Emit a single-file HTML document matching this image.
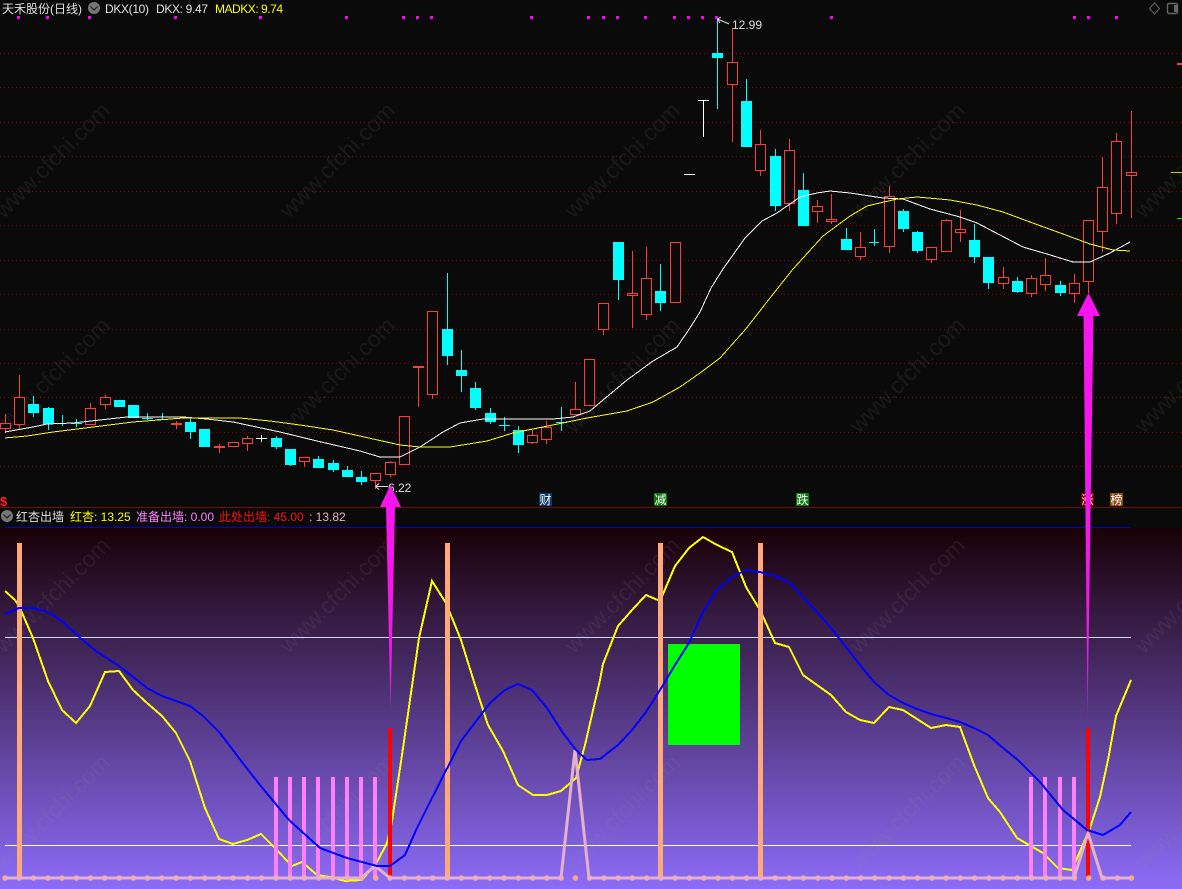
<!DOCTYPE html>
<html lang="zh-CN">
<head>
<meta charset="utf-8">
<title>天禾股份 (日线)</title>
<style>
html,body{margin:0;padding:0;background:#0a0a0a;width:1182px;height:889px;overflow:hidden}
svg{display:block;position:absolute;left:0;top:0}
text{font-family:"Liberation Sans","Noto Sans CJK SC",sans-serif;font-size:12px}
.wm text{font-size:23px;fill:rgba(150,150,150,.115)}
</style>
</head>
<body>
<svg width="1182" height="889" viewBox="0 0 1182 889" xmlns="http://www.w3.org/2000/svg">
<defs>
<linearGradient id="bg" x1="0" y1="0" x2="0" y2="1">
<stop offset="0" stop-color="#190006"/>
<stop offset="1" stop-color="#8c6cf8"/>
</linearGradient>
<linearGradient id="fadeA" x1="0" y1="0" x2="0" y2="1">
<stop offset="0" stop-color="#f814ee"/>
<stop offset=".8" stop-color="#f01ae8"/>
<stop offset="1" stop-color="#a030c0"/>
</linearGradient>
</defs>

<rect width="1182" height="889" fill="#0a0a0a"/>
<rect x="0" y="528" width="1182" height="361" fill="url(#bg)"/>

<!-- dotted grid -->
<g stroke="#8a0000" stroke-width="1" stroke-dasharray="1 3" shape-rendering="crispEdges">
<path d="M0 53.5H1182M0 87.5H1182M0 122.5H1182M0 156.5H1182M0 191.5H1182M0 225.5H1182M0 260.5H1182M0 294.5H1182M0 329.5H1182M0 363.5H1182M0 397.5H1182M0 432.5H1182M0 466.5H1182" fill="none"/>
</g>
<path d="M0 507.5H1182" stroke="#7a0808" stroke-width="1" shape-rendering="crispEdges"/>
<path d="M5 527.5H1131" stroke="#0000e0" stroke-width="1" shape-rendering="crispEdges"/>

<!-- watermark -->
<g class="wm" text-anchor="middle">
<text transform="translate(52 160) rotate(-45)" y="8">www.cfchi.com</text>
<text transform="translate(337 160) rotate(-45)" y="8">www.cfchi.com</text>
<text transform="translate(622 160) rotate(-45)" y="8">www.cfchi.com</text>
<text transform="translate(907 160) rotate(-45)" y="8">www.cfchi.com</text>
<text transform="translate(1192 160) rotate(-45)" y="8">www.cfchi.com</text>
<text transform="translate(52 375) rotate(-45)" y="8">www.cfchi.com</text>
<text transform="translate(337 375) rotate(-45)" y="8">www.cfchi.com</text>
<text transform="translate(622 375) rotate(-45)" y="8">www.cfchi.com</text>
<text transform="translate(907 375) rotate(-45)" y="8">www.cfchi.com</text>
<text transform="translate(1192 375) rotate(-45)" y="8">www.cfchi.com</text>
<text transform="translate(52 595) rotate(-45)" y="8">www.cfchi.com</text>
<text transform="translate(337 595) rotate(-45)" y="8">www.cfchi.com</text>
<text transform="translate(622 595) rotate(-45)" y="8">www.cfchi.com</text>
<text transform="translate(907 595) rotate(-45)" y="8">www.cfchi.com</text>
<text transform="translate(1192 595) rotate(-45)" y="8">www.cfchi.com</text>
<text transform="translate(52 812) rotate(-45)" y="8">www.cfchi.com</text>
<text transform="translate(337 812) rotate(-45)" y="8">www.cfchi.com</text>
<text transform="translate(622 812) rotate(-45)" y="8">www.cfchi.com</text>
<text transform="translate(907 812) rotate(-45)" y="8">www.cfchi.com</text>
<text transform="translate(1192 812) rotate(-45)" y="8">www.cfchi.com</text>
</g>

<!-- magenta top dots -->
<g fill="#ff00ff" shape-rendering="crispEdges">
<rect x="17" y="16" width="3" height="3"/><rect x="46" y="16" width="3" height="3"/><rect x="88" y="16" width="3" height="3"/><rect x="174" y="16" width="3" height="3"/><rect x="259" y="16" width="3" height="3"/><rect x="345" y="16" width="3" height="3"/><rect x="402" y="16" width="3" height="3"/><rect x="416" y="16" width="3" height="3"/><rect x="430" y="16" width="3" height="3"/><rect x="530" y="16" width="3" height="3"/><rect x="587" y="16" width="3" height="3"/><rect x="602" y="16" width="3" height="3"/><rect x="616" y="16" width="3" height="3"/><rect x="644" y="16" width="3" height="3"/><rect x="673" y="16" width="3" height="3"/><rect x="687" y="16" width="3" height="3"/><rect x="701" y="16" width="3" height="3"/><rect x="715" y="16" width="3" height="3"/><rect x="830" y="16" width="3" height="3"/><rect x="1073" y="16" width="3" height="3"/><rect x="1087" y="16" width="3" height="3"/><rect x="1115" y="16" width="3" height="3"/>
</g>

<!-- candles: wicks -->
<g shape-rendering="crispEdges" fill="none">
<path stroke="#ff3c3c" d="M5.5 414V433M19.5 375V430M90.5 403V425M105.5 395V409M176.5 421V429M219.5 444V453M247.5 436V451M304.5 462V467M375.5 481V489M390.5 461V477M418.5 367V407M432.5 395V399M532.5 430V444M546.5 421V444M575.5 382V415M603.5 330V335M632.5 251V328M646.5 247V320M732.5 28V142M760.5 130V176M789.5 139V211M817.5 200V223M831.5 194V224M860.5 232V260M889.5 186V253M931.5 260V263M946.5 219V252M960.5 210V242M1003.5 267V289M1031.5 275V297M1045.5 258V291M1074.5 274V303M1088.5 282V293M1102.5 157V252M1116.5 133V224M1131.5 111V218"/>
<path stroke="#00ffff" d="M33.5 396V417M48.5 407V430M62.5 415V426M76.5 419V427M71 423.5H82M147.5 413V420M142 418.5H153M162.5 413V420M157 419.5H168M190.5 419V439M276.5 436V449M290.5 449V466M318.5 456V468M333.5 460V472M347.5 466V477M361.5 471V485M447.5 273V365M461.5 350V392M475.5 382V410M490.5 408V424M504.5 417V431M499 425.5H510M518.5 426V453M561.5 407V431M556 422.5H567M618.5 280V300M660.5 264V311M717.5 19V109M746.5 79V101M775.5 149V211M803.5 173V190M846.5 228V239M874.5 229V246M869 242.5H879M903.5 209V232M917.5 231V253M974.5 224V263M988.5 283V289M1017.5 277V293M1060.5 281V296"/>
<path stroke="#ffffff" d="M261.5 435V442M256 438.5H267M703.5 100V137M698 100.5H709M684 174.5H695"/>
</g>
<!-- candles: cyan bodies -->
<path fill="#00ffff" shape-rendering="crispEdges" d="M28 404h11V413h-11zM43 408h11V424h-11zM114 400h11V407h-11zM128 405h11V418h-11zM185 422h11V432h-11zM199 429h11V447h-11zM271 438h11V447h-11zM285 449h11V465h-11zM313 459h11V468h-11zM328 463h11V470h-11zM342 470h11V477h-11zM356 477h11V482h-11zM442 329h11V356h-11zM456 370h11V376h-11zM470 388h11V408h-11zM485 413h11V422h-11zM513 430h11V445h-11zM613 242h11V280h-11zM655 291h11V303h-11zM712 53h11V58h-11zM741 101h11V147h-11zM770 156h11V206h-11zM798 190h11V226h-11zM841 239h11V250h-11zM898 211h11V229h-11zM912 232h11V251h-11zM969 240h11V257h-11zM983 257h11V283h-11zM1012 281h11V292h-11zM1055 285h11V293h-11z"/>
<!-- candles: red hollow bodies -->
<path fill="#0a0a0a" stroke="#ff3c3c" stroke-width="1" shape-rendering="crispEdges" d="M.5 423.5h10V428.5h-10zM14.5 397.5h10V424.5h-10zM85.5 408.5h10V424.5h-10zM100.5 397.5h10V404.5h-10zM214.5 446.5h10V447.5h-10zM228.5 442.5h10V446.5h-10zM242.5 438.5h10V443.5h-10zM299.5 457.5h10V461.5h-10zM370.5 473.5h10V480.5h-10zM385.5 462.5h10V474.5h-10zM399.5 416.5h10V464.5h-10zM427.5 311.5h10V394.5h-10zM527.5 435.5h10V442.5h-10zM541.5 427.5h10V439.5h-10zM570.5 409.5h10V414.5h-10zM584.5 359.5h10V405.5h-10zM598.5 303.5h10V329.5h-10zM627.5 293.5h10V295.5h-10zM641.5 278.5h10V314.5h-10zM670.5 242.5h10V302.5h-10zM727.5 62.5h10V84.5h-10zM755.5 144.5h10V170.5h-10zM784.5 150.5h10V203.5h-10zM812.5 206.5h10V211.5h-10zM826.5 219.5h10V221.5h-10zM855.5 247.5h10V256.5h-10zM884.5 196.5h10V246.5h-10zM926.5 247.5h10V259.5h-10zM941.5 220.5h10V251.5h-10zM955.5 229.5h10V232.5h-10zM998.5 277.5h10V283.5h-10zM1026.5 278.5h10V293.5h-10zM1040.5 275.5h10V284.5h-10zM1069.5 283.5h10V293.5h-10zM1083.5 220.5h10V281.5h-10zM1097.5 187.5h10V231.5h-10zM1111.5 141.5h10V213.5h-10zM1126.5 172.5h10V175.5h-10z"/>
<g fill="#ff3c3c" shape-rendering="crispEdges">
<rect x="171" y="423" width="11" height="2"/>
<rect x="413" y="366" width="11" height="2"/>
</g>

<!-- MA curves -->
<polyline fill="none" stroke="#ffffff" stroke-width="1" shape-rendering="crispEdges" points="5,432 33,427 47,424 73,423 100,420 127,417 183,417 207,419 233,422 280,432 317,441 360,451 380,457 400,457 420,447 443,432 460,423 483,419 553,419 573,417 590,411 603,400 627,380 653,361 677,347 690,328 700,312 711,288 723,269 745,238 762,221 777,213 800,197 817,193 830,191 850,193 883,198 903,199 930,209 960,217 977,223 1023,247 1047,254 1073,262 1090,262 1110,253 1130,242"/>
<polyline fill="none" stroke="#ffff00" stroke-width="1" shape-rendering="crispEdges" points="5,438 27,436 53,432 93,427 133,422 183,418 240,418 270,421 300,425 333,430 400,445 420,447 450,447 487,441 513,433 543,427 587,418 627,411 653,402 680,387 700,373 720,358 745,330 770,298 793,269 823,236 850,216 867,206 897,199 917,197 950,200 977,205 1003,212 1030,222 1063,234 1090,244 1113,250 1130,251"/>

<!-- right ticks -->
<g shape-rendering="crispEdges">
<rect x="1177" y="63" width="5" height="2" fill="#ff3c3c"/>
<rect x="1171" y="172" width="11" height="1" fill="#c8c800"/>
<rect x="1177" y="218" width="5" height="1" fill="#00e000"/>
</g>

<!-- high/low marks -->
<path d="M717.5 19L729 24M717.5 19L721 17M717.5 19L720 23" fill="none" stroke="#dddddd" stroke-width="1"/>
<text x="732" y="29" fill="#dddddd">12.99</text>
<path d="M375.5 486.5H388M375.5 486.5L379 483.5M375.5 486.5L379 489.5" fill="none" stroke="#dddddd" stroke-width="1"/>
<text x="388" y="492" fill="#dddddd">6.22</text>

<!-- header -->
<text x="2" y="13" fill="#e0e0e0">天禾股份(日线)</text>
<circle cx="94" cy="8" r="6" fill="#777777"/>
<path d="M90.5 6.5L94 10L97.5 6.5" fill="none" stroke="#1e1e1e" stroke-width="1.2"/>
<text x="105" y="13" fill="#e0e0e0" textLength="44">DKX(10)</text>
<text x="156" y="13" fill="#e0e0e0" textLength="52">DKX: 9.47</text>
<text x="215" y="13" fill="#ffff00" textLength="68">MADKX: 9.74</text>
<path d="M1154.5 3L1159.5 8.5L1154.5 14L1149.5 8.5Z" fill="none" stroke="#666666" stroke-width="1"/>
<rect x="1167.5" y="3.5" width="10" height="10" rx="1.5" fill="none" stroke="#666666" stroke-width="1.4"/>
<rect x="1174" y="5" width="3" height="7" fill="#666666"/>

<!-- marker row -->
<text x="0" y="506" fill="#ff2020" font-weight="bold" style="font-size:13px">$</text>
<rect x="539" y="493" width="13" height="13" fill="#0a3a6a"/><text x="539.5" y="504" fill="#ffffff">财</text>
<rect x="654" y="493" width="13" height="13" fill="#0a7a0a"/><text x="654.5" y="504" fill="#ffffff">减</text>
<rect x="796" y="493" width="13" height="13" fill="#0a7a0a"/><text x="796.5" y="504" fill="#ffffff">跌</text>
<rect x="1081" y="493" width="13" height="13" fill="#800000"/><text x="1081.5" y="504" fill="#ffffff">涨</text>
<rect x="1110" y="493" width="13" height="13" fill="#8b4a10"/><text x="1110.5" y="504" fill="#ffffff">榜</text>

<!-- second panel header -->
<circle cx="7" cy="516" r="6" fill="#777777"/>
<path d="M3.5 514.5L7 518L10.5 514.5" fill="none" stroke="#1e1e1e" stroke-width="1.2"/>
<text x="16" y="521" fill="#e0e0e0">红杏出墙</text>
<text x="70" y="521" fill="#ffff00">红杏: 13.25</text>
<text x="136" y="521" fill="#ff80ff">准备出墙: 0.00</text>
<text x="219" y="521" fill="#ff1010">此处出墙: 45.00</text>
<text x="309" y="521" fill="#e8b0c8">: 13.82</text>

<!-- lower panel -->
<path d="M5 637.5H1131" stroke="#c4dce8" stroke-width="1" shape-rendering="crispEdges"/>
<path d="M5 845.5H1131" stroke="#ffffff" stroke-width="1" shape-rendering="crispEdges"/>
<rect x="668" y="644" width="72" height="101" fill="#00ff00" shape-rendering="crispEdges"/>

<polyline fill="none" stroke="#ffff00" stroke-width="2" shape-rendering="crispEdges" points="5,591 15,600 19,606 33,638 48,681 62,710 76,723 90,706 105,672 119,671 133,690 147,703 162,716 176,733 190,761 205,808 219,839 233,844 247,840 261,834 274,847 292,866 302,862 317,875 330,877 345,881 362,880 377,862 387,843 392,821 402,755 419,638 432,581 446,603 461,640 475,685 488,725 503,751 518,785 533,795 547,795 561,791 576,778 585,745 600,680 603,664 618,626 632,610 646,595 660,601 675,566 689,548 703,537 717,545 732,552 746,587 760,610 775,643 789,647 803,675 817,685 831,695 846,712 860,720 874,723 889,707 903,710 917,719 931,728 946,725 960,727 974,765 988,798 1000,812 1017,838 1043,853 1058,868 1072,870 1090,828 1100,797 1108,760 1116,716 1131,680"/>

<!-- bars -->
<g shape-rendering="crispEdges">
<g fill="#ffa87a">
<rect x="17" y="543" width="5" height="335"/><rect x="445" y="543" width="5" height="335"/><rect x="658" y="543" width="5" height="335"/><rect x="758" y="543" width="5" height="335"/>
</g>
<g fill="#ff80ff">
<rect x="274" y="777" width="4" height="101"/><rect x="288" y="777" width="4" height="101"/><rect x="302" y="777" width="4" height="101"/><rect x="316" y="777" width="4" height="101"/><rect x="331" y="777" width="4" height="101"/><rect x="345" y="777" width="4" height="101"/><rect x="359" y="777" width="4" height="101"/><rect x="373" y="777" width="4" height="101"/><rect x="1029" y="777" width="4" height="101"/><rect x="1043" y="777" width="4" height="101"/><rect x="1058" y="777" width="4" height="101"/><rect x="1072" y="777" width="4" height="101"/>
</g>
<g fill="#ff0000">
<rect x="388" y="728" width="4" height="150"/><rect x="1086" y="728" width="4" height="150"/>
</g>
</g>

<!-- base dots + pink line -->
<path d="M5 878H1132" fill="none" stroke="#ffa87a" stroke-width="5.5" stroke-linecap="round" stroke-dasharray="0 14.26"/>
<path d="M5 878H361L375 866L390 878H561L575 750L589 878H1074L1088 833L1102 878H1131" fill="none" stroke="#e6b0cc" stroke-width="3"/>

<!-- blue -->
<polyline fill="none" stroke="#0000ff" stroke-width="2" shape-rendering="crispEdges" points="5,614 19,608 33,608 48,612 62,621 78,636 96,651 119,666 147,688 162,696 190,706 203,716 220,733 245,766 260,785 289,820 320,848 347,858 377,866 390,866 405,855 417,828 432,798 461,741 490,703 505,690 518,684 532,690 547,708 563,733 576,750 587,760 600,759 618,745 632,730 646,712 660,690 675,665 689,643 703,612 717,590 732,577 746,570 760,572 775,576 789,582 803,597 817,612 831,628 846,647 860,665 874,682 889,695 903,703 917,709 931,714 946,718 960,722 974,728 988,735 1003,748 1018,760 1040,782 1063,810 1087,830 1103,835 1120,825 1131,812"/>

<!-- arrows -->
<path d="M390.5 485L401 507H395L390.5 711L386 507H380Z" fill="url(#fadeA)"/>
<path d="M1088.5 293L1100 316H1093.5L1087.5 718L1083.5 316H1077Z" fill="url(#fadeA)"/>
</svg>
</body>
</html>
